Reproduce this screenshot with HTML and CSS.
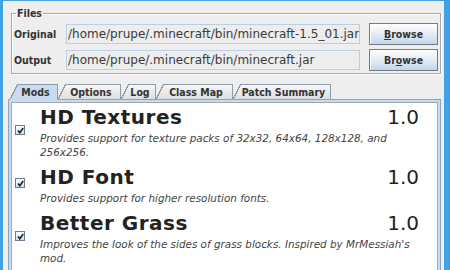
FILE: index.html
```html
<!DOCTYPE html>
<html>
<head>
<meta charset="utf-8">
<link rel="stylesheet" href="styles.css">
</head>
<body>
<div class="window">
  <fieldset class="files">
    <legend>Files</legend>
    <div class="row">
      <span class="label">Original</span>
      <div class="field">/home/prupe/.minecraft/bin/minecraft-1.5_01.jar</div>
      <button class="btn"><u>B</u>rowse</button>
    </div>
    <div class="row">
      <span class="label">Output</span>
      <div class="field">/home/prupe/.minecraft/bin/minecraft.jar</div>
      <button class="btn">Br<u>o</u>wse</button>
    </div>
  </fieldset>
  <div class="tabs">
    <div class="tab sel t-mods">Mods</div>
    <div class="tab t-options">Options</div>
    <div class="tab t-log">Log</div>
    <div class="tab t-class">Class Map</div>
    <div class="tab t-patch">Patch Summary</div>
  </div>
  <div class="panel">
    <div class="list">
      <div class="mod">
        <div class="check"><svg width="7" height="7" viewBox="0 0 7 7"><path d="M1 3.5 L2.8 5.8 L6.2 1" fill="none" stroke="#1a1a1a" stroke-width="1.5"/></svg></div>
        <div class="info">
          <div class="head"><span class="name">HD Textures</span><span class="ver">1.0</span></div>
          <div class="desc">Provides support for texture packs of 32x32, 64x64, 128x128, and<br>256x256.</div>
        </div>
      </div>
      <div class="mod">
        <div class="check"><svg width="7" height="7" viewBox="0 0 7 7"><path d="M1 3.5 L2.8 5.8 L6.2 1" fill="none" stroke="#1a1a1a" stroke-width="1.5"/></svg></div>
        <div class="info">
          <div class="head"><span class="name">HD Font</span><span class="ver">1.0</span></div>
          <div class="desc">Provides support for higher resolution fonts.</div>
        </div>
      </div>
      <div class="mod">
        <div class="check"><svg width="7" height="7" viewBox="0 0 7 7"><path d="M1 3.5 L2.8 5.8 L6.2 1" fill="none" stroke="#1a1a1a" stroke-width="1.5"/></svg></div>
        <div class="info">
          <div class="head"><span class="name">Better Grass</span><span class="ver">1.0</span></div>
          <div class="desc">Improves the look of the sides of grass blocks. Inspired by MrMessiah's<br>mod.</div>
        </div>
      </div>
    </div>
  </div>
</div>
</body>
</html>
```

FILE: styles.css
```css
html, body {
  margin: 0;
  padding: 0;
}
body {
  width: 450px;
  height: 270px;
  overflow: hidden;
  font-family: "DejaVu Sans", sans-serif;
  color: #333;
}
.window {
  box-sizing: border-box;
  width: 450px;
  height: 270px;
  background: #eeeeee;
  border-left: 3px solid #42a0e6;
  border-right: 6px solid #42a0e6;
  border-top: 1px solid #42a0e6;
  padding: 0 3px 0 5px;
  overflow: hidden;
}
.files {
  margin: 6px 0 0 3px;
  padding: 1px 2px 0 1px;
  border: 1px solid #a8a8a8;
  box-shadow: inset 1px 1px 0 #ffffff, 1px 1px 0 #ffffff;
  min-width: 0;
}
.files legend {
  font-family: "DejaVu Sans Condensed", "DejaVu Sans", sans-serif;
  font-weight: bold;
  font-size: 10.5px;
  line-height: 13px;
  padding: 0 1px;
  margin-left: 3px;
  color: #333;
}
.row {
  display: flex;
  align-items: center;
  height: 26px;
}
.label {
  font-family: "DejaVu Sans Condensed", "DejaVu Sans", sans-serif;
  font-weight: bold;
  font-size: 10.5px;
  width: 52px;
  padding-left: 1px;
  color: #333;
}
.field {
  box-sizing: border-box;
  width: 294px;
  height: 20px;
  border: 1px solid #b8cfe5;
  background: #ededed;
  font-size: 12px;
  line-height: 18px;
  padding-left: 1px;
  white-space: nowrap;
  overflow: hidden;
  color: #3a3a3a;
}
.btn {
  margin-left: 9px;
  box-sizing: border-box;
  width: 69px;
  height: 22px;
  border: 1px solid #6d7d8d;
  box-shadow: inset 1px 1px 0 #ffffff;
  background: linear-gradient(#ffffff, #e6eef6 45%, #c4d6e9);
  font-family: "DejaVu Sans Condensed", "DejaVu Sans", sans-serif;
  font-weight: bold;
  font-size: 10.5px;
  color: #333;
  padding: 0;
}
.tabs {
  display: flex;
  margin-top: 10px;
  margin-left: 2px;
  height: 15px;
  align-items: flex-end;
  position: relative;
  z-index: 1;
}
.tab {
  position: relative;
  box-sizing: border-box;
  height: 15px;
  border: 1px solid #8c9cac;
  border-bottom: none;
  border-left: none;
  background: linear-gradient(#f6f6f6, #dedede);
  font-family: "DejaVu Sans Condensed", "DejaVu Sans", sans-serif;
  font-weight: bold;
  font-size: 10.5px;
  line-height: 14px;
  text-align: center;
  padding-left: 4px;
  color: #333;
}
.tab::before {
  content: "";
  position: absolute;
  left: 0;
  top: -1px;
  width: 8px;
  height: 15px;
  background: linear-gradient(to bottom right, #eeeeee calc(50% - 0.7px), #8c9cac calc(50% - 0.7px), #8c9cac calc(50% + 0.7px), transparent calc(50% + 0.7px));
}
.tab.sel {
  background: #c8dcf0;
  height: 16px;
  margin-bottom: -1px;
}
.t-mods { width: 48px; }
.t-options { width: 63px; }
.t-log { width: 35px; }
.t-class { width: 77px; }
.t-patch { width: 98px; }
.panel {
  box-sizing: border-box;
  height: 180px;
  border: 1px solid #8ea4ba;
  border-bottom: none;
  background: #c8dcf0;
  padding: 2px 2px 0 2px;
}
.list {
  background: #ffffff;
  height: 100%;
  border: 1px solid #a0a8b0;
  border-bottom: none;
  box-sizing: border-box;
  padding-top: 0;
}
.mod {
  display: flex;
  align-items: center;
  padding: 2px 0 4px 0;
}
.check {
  box-sizing: border-box;
  width: 10px;
  height: 10px;
  border: 1px solid #6d7d8d;
  background: linear-gradient(#ffffff, #cfdeee);
  margin: -4px 0 0 3px;
  display: flex;
  align-items: center;
  justify-content: center;
}
.info {
  margin-left: 15px;
  flex: 1;
  padding-right: 18px;
}
.head {
  display: flex;
  justify-content: space-between;
  line-height: 24px;
  height: 24px;
  margin-bottom: 2px;
}
.name {
  font-weight: bold;
  font-size: 20px;
  letter-spacing: 0.5px;
  color: #222;
}
.ver {
  font-size: 20px;
  color: #222;
}
.desc {
  font-style: italic;
  font-size: 10.4px;
  line-height: 14px;
  color: #444;
}
```
